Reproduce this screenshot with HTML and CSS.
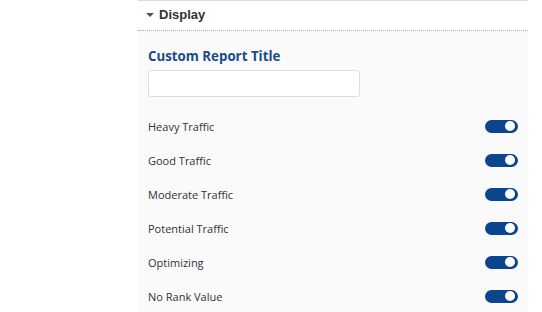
FILE: index.html
```html
<!DOCTYPE html>
<html lang="en">
<head>
  <meta charset="UTF-8" />
  <title>Display</title>
  <link rel="stylesheet" href="styles.css">
</head>
<body>
  <div class="panel">
    <div class="panel-header">
      <span class="caret"></span>
      Display
    </div>
    <div class="panel-body">
      <label class="field-title" for="reportTitle">Custom Report Title</label>
      <input type="text" id="reportTitle" class="title-input">

      <div class="toggles">
        <div class="toggle-row">
          <span>Heavy Traffic</span>
          <span class="switch on"></span>
        </div>
        <div class="toggle-row">
          <span>Good Traffic</span>
          <span class="switch on"></span>
        </div>
        <div class="toggle-row">
          <span>Moderate Traffic</span>
          <span class="switch on"></span>
        </div>
        <div class="toggle-row">
          <span>Potential Traffic</span>
          <span class="switch on"></span>
        </div>
        <div class="toggle-row">
          <span>Optimizing</span>
          <span class="switch on"></span>
        </div>
        <div class="toggle-row">
          <span>No Rank Value</span>
          <span class="switch on"></span>
        </div>
      </div>
    </div>
  </div>
</body>
</html>
```

FILE: styles.css
```css
body {
  margin: 0;
  background: #fff;
  font-family: "Open Sans", sans-serif;
}
.panel {
  margin-left: 138px;
  width: 390px;
  border-top: 1px solid #ddd;
  height: 312px;
  background: #fafafa;
}
.panel-header {
  box-sizing: border-box;
  background: #fff;
  height: 30px;
  padding-bottom: 2px;
  border-bottom: 1px dotted #aaa;
  display: flex;
  align-items: center;
  padding-left: 8px;
  font-family: "Liberation Sans", Arial, sans-serif;
  font-size: 13px;
  font-weight: bold;
  color: #333;
}
.caret {
  width: 0;
  height: 0;
  border-left: 4px solid transparent;
  border-right: 4px solid transparent;
  border-top: 4px solid #555;
  margin-right: 5px;
}
.panel-body {
  padding: 16px 10px 0 10px;
}
.field-title {
  display: block;
  font-size: 13.3px;
  font-weight: bold;
  color: #1c4a8c;
  margin-bottom: 5px;
}
.title-input {
  display: block;
  box-sizing: border-box;
  width: 212px;
  height: 27px;
  border: 1px solid #ddd;
  border-radius: 3px;
  background: #fff;
}
.toggles {
  margin-top: 12px;
}
.toggle-row {
  display: flex;
  justify-content: space-between;
  align-items: center;
  height: 34px;
  font-size: 11px;
  color: #333;
}
.switch {
  position: relative;
  width: 33px;
  height: 13px;
  border-radius: 7px;
  background: #0b458e;
}
.switch.on::after {
  content: "";
  position: absolute;
  right: 3px;
  top: 1.5px;
  width: 10px;
  height: 10px;
  border-radius: 50%;
  background: #fff;
}
```
